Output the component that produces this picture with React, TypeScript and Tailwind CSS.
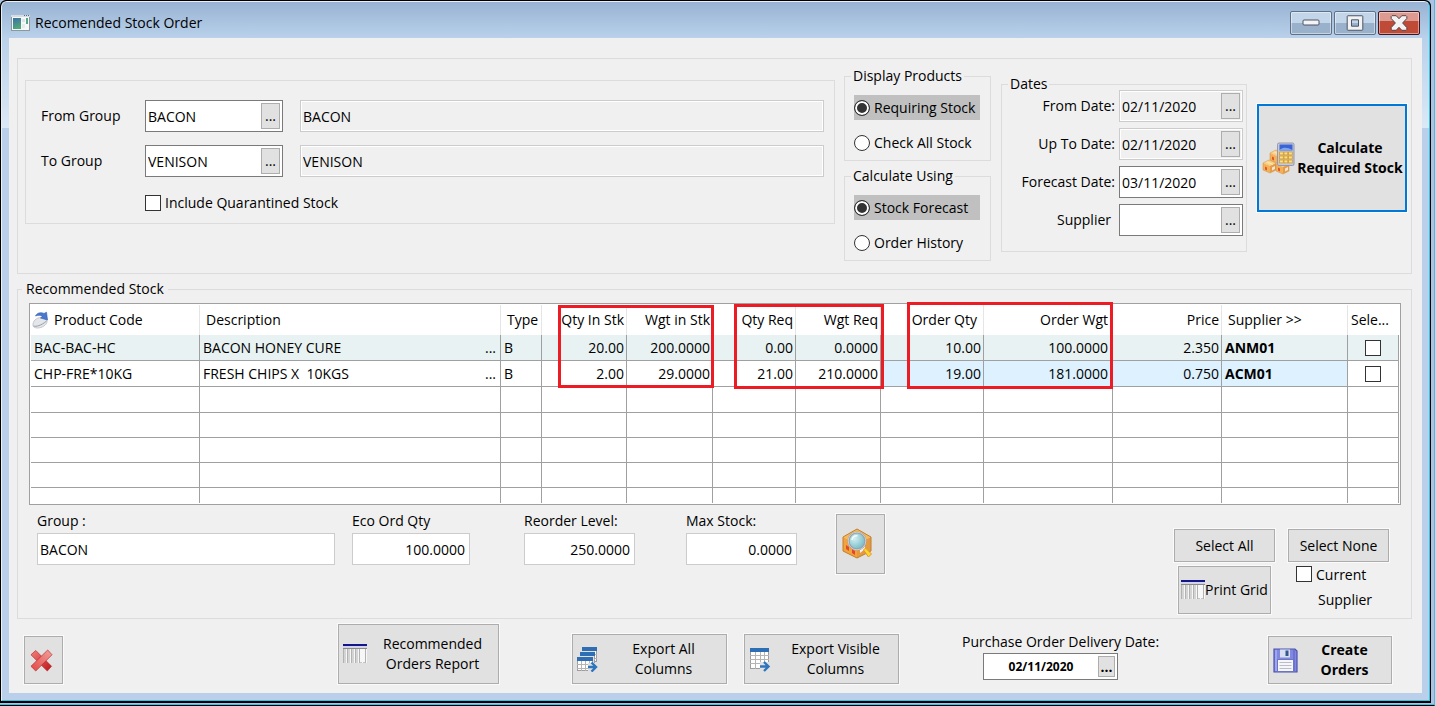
import React, { useId } from "react";

const panelBorder = "border border-[#dcdcdc]";
const raised = "border border-[#adadad] bg-[#e1e1e1] shadow-[0_0_0_1px_#fafafa]";

function WindowIcon() {
  return (
    <svg width="19" height="16" viewBox="0 0 19 16" aria-hidden="true">
      <defs>
        <linearGradient id="win-pane" x1="0" y1="0" x2="0.3" y2="1">
          <stop offset="0" stopColor="#3c6fa5" />
          <stop offset="1" stopColor="#4fa77c" />
        </linearGradient>
      </defs>
      <rect x="0.5" y="0.5" width="18" height="15" fill="#f6f8f8" stroke="#8e989c" />
      <rect x="0" y="0" width="19" height="2" fill="#d5dde2" />
      <path d="M13 .5h1M15 .5h1M17 .5h1" stroke="#5a6c7c" />
      <rect x="2" y="3" width="8" height="11" fill="url(#win-pane)" />
      <rect x="11" y="4" width="3" height="3" fill="#dfe4e6" />
      <rect x="11" y="9" width="3" height="4" fill="#e8ebec" />
      <rect x="15" y="3" width="2" height="6" fill="#58a68c" />
    </svg>
  );
}

function MinimizeGlyph() {
  return (
    <svg width="18" height="8" viewBox="0 0 18 8" aria-hidden="true">
      <rect x="1" y="1" width="16" height="5" rx="1" fill="#f4f4f4" stroke="#4c5566" />
    </svg>
  );
}

function MaximizeGlyph() {
  return (
    <svg width="18" height="16" viewBox="0 0 18 16" aria-hidden="true">
      <path
        d="M2 .75h14a.8.8 0 0 1 .8.8v12.9a.8.8 0 0 1-.8.8H2a.8.8 0 0 1-.8-.8V1.55A.8.8 0 0 1 2 .75ZM5.5 4.8v6.4h7V4.8Z"
        fill="#f2f2f2"
        fillRule="evenodd"
        stroke="#4c5566"
      />
    </svg>
  );
}

function CloseGlyph() {
  return (
    <svg width="18" height="16" viewBox="0 0 18 16" aria-hidden="true">
      <path
        d="M1.2 1.5 2 .7h4.2L9 3.7l2.8-3H16l.8.8v2L12.6 8l4.2 4.5v2l-.8.8h-4.2L9 12.3l-2.8 3H2l-.8-.8v-2L5.4 8 1.2 3.5Z"
        fill="#f3f3f3"
        stroke="#57444c"
      />
    </svg>
  );
}

function Box({ x, y }: { x: number; y: number }) {
  return (
    <g transform={`translate(${x} ${y})`}>
      <path d="M0 3 6 0l7 3-6 3Z" fill="#fbd083" />
      <path d="M0 3 7 6v7L0 10Z" fill="#f3b158" />
      <path d="M13 3 7 6v7l6-3Z" fill="#e59d45" />
      <path d="m3 1.5 7 3" stroke="#fde7b4" strokeWidth="1.2" />
      <path d="M2 6.5v3l2 1v-3Z" fill="#e2552c" />
      <path d="m9 7.5 3-1.4v3L9 10.5Z" fill="#f5e3d8" />
      <path d="M0 3 6 0l7 3v7l-6 3-7-3Z" fill="none" stroke="#d08f45" strokeWidth="0.5" />
    </g>
  );
}

function CalculateIcon() {
  return (
    <svg width="33" height="33" viewBox="0 0 33 33" className="shrink-0" aria-hidden="true">
      <Box x={8} y={8} />
      <Box x={1} y={18} />
      <Box x={14} y={19} />
      <rect x="15.5" y="1" width="16.5" height="22.5" rx="1.5" fill="#c5c9dc" stroke="#8d92ac" strokeWidth="0.9" />
      <rect x="17.5" y="2.5" width="13" height="6" fill="#3a63d6" />
      <path d="M18 7.5c4-3 8-2 12 .3v.7H18Z" fill="#7ea6f2" />
      {[10, 14, 18].map((y) =>
        [17.5, 22, 26.5].map((x) => (
          <rect key={`${x}-${y}`} x={x} y={y} width="3.8" height="2.9" fill="#fbe08a" stroke="#d79a26" strokeWidth="0.8" />
        )),
      )}
    </svg>
  );
}

function SearchBoxIcon() {
  return (
    <svg width="32" height="32" viewBox="0 0 32 32" aria-hidden="true">
      <defs>
        <radialGradient id="lens" cx="0.35" cy="0.35" r="0.8">
          <stop offset="0" stopColor="#d4f0f3" />
          <stop offset="1" stopColor="#63b0bd" />
        </radialGradient>
      </defs>
      <path d="M1 9 15 1l14 8-14 7Z" fill="#f6bb58" />
      <path d="M1 9l14 7v14L1 23Z" fill="#f3a33c" />
      <path d="M29 9 15 16v14l14-7Z" fill="#e59a40" />
      <path d="M1 9 15 1l14 8v14l-14 7-14-7Z" fill="none" stroke="#c07f2c" />
      <path d="m4 17 3 2v4l-3-2ZM10 21l3 2v4l-3-2Z" fill="#e4472b" />
      <path d="m18 20 5-3v4l-5 4Z" fill="#f3f1f4" />
      <path d="m21.500 22 2-2 6 6-3 3Z" fill="#fcd533" stroke="#e59824" />
      <circle cx="15" cy="13" r="8.500" fill="url(#lens)" stroke="#9a9da3" strokeWidth="2.200" />
      <circle cx="15" cy="13" r="8.800" fill="none" stroke="#d6d9dd" strokeWidth="0.800" />
      <path d="M10 12c.5-3 3-4.500 5.500-4.300" fill="none" stroke="#f2fcfd" strokeWidth="1.500" />
    </svg>
  );
}

function SortIcon() {
  return (
    <svg width="18" height="18" viewBox="0 0 18 18" className="shrink-0" aria-hidden="true">
      <path d="M1 14.500C.5 10 4.500 6.500 9 6.500c4 0 6.500 2 6 4.500-.5 3-5 6-9.500 6-2.500 0-4.300-.8-4.500-2.500Z" fill="#e4e6ea" stroke="#b9bcc4" strokeWidth="0.800" />
      <path d="M1.500 15c2.500 1 8-.5 13-5" fill="none" stroke="#9a9eaa" />
      <path d="M3.500 5C5 1.800 9 .8 12 2.500L14.500 1.200 15.500 9 8.500 7l2-1.500C8.500 4 6 4 3.500 5Z" fill="#4a78cf" stroke="#2f58ab" strokeWidth="0.600" />
    </svg>
  );
}

function GridIcon() {
  return (
    <svg width="24" height="20" viewBox="0 0 24 20" className="shrink-0" aria-hidden="true">
      <rect x="0" y="4" width="24" height="15" fill="#f7f7f7" />
      <rect x="0" y="0" width="24" height="2" fill="#15158a" />
      <rect x="0" y="2" width="24" height="2" fill="#d3d4e8" />
      <path d="M0 4.500h24" stroke="#8a8a8a" />
      <path d="M0 18.500h24" stroke="#c6c6c6" strokeDasharray="3 1" />
      <path d="M2 5v14M6 5v14M10 5v14M14 5v14" stroke="#d4d4d4" strokeWidth="2" />
      <path d="M.5 5v14M4.500 5v14M8.500 5v14M12.500 5v14M16.500 5v14M22.500 5v14" stroke="#b2b2b2" />
    </svg>
  );
}

function Sheet({ x, y, w, h }: { x: number; y: number; w: number; h: number }) {
  const cols = [1, 2, 3].map((i) => Math.round((w * i) / 4) + 0.5);
  return (
    <g transform={`translate(${x} ${y})`}>
      <rect x="0.500" y="0.500" width={w - 1} height={h - 1} fill="#fff" stroke="#9d9d9d" />
      {cols.map((c) => (
        <path key={c} d={`M${c} 4V${h}`} stroke="#b5b5b5" />
      ))}
      <path d={`M0 7.500H${w}M0 11.500H${w}M0 15.500H${w > 17 ? w : 0}`} stroke="#b5b5b5" />
      <rect x="0" y="0" width={w} height="4" fill="#2e6eb5" />
    </g>
  );
}

function ExportAllIcon() {
  return (
    <svg width="24" height="25" viewBox="0 0 24 25" className="shrink-0" aria-hidden="true">
      <Sheet x={5} y={0} w={15} h={15} />
      <path d="M2 4h16v16H2Z" fill="#e1e1e1" />
      <Sheet x={3} y={5} w={15} h={15} />
      <path d="M0 9h17v15H0Z" fill="#e1e1e1" />
      <Sheet x={0} y={10} w={16} h={14} />
      <path d="M11 16h8v8h-8Z" fill="#e1e1e1" />
      <path d="M11 20h7M14.500 15.500 19 20l-4.500 4.500" fill="none" stroke="#2e75bd" strokeWidth="2.400" />
    </svg>
  );
}

function ExportVisibleIcon() {
  return (
    <svg width="24" height="25" viewBox="0 0 24 25" className="shrink-0" aria-hidden="true">
      <Sheet x={1} y={1} w={19} h={21} />
      <path d="M11 15h12v9H11Z" fill="#e1e1e1" />
      <path d="M11 19.500h8M15 15l4.500 4.500L15 24" fill="none" stroke="#2e75bd" strokeWidth="2.400" />
    </svg>
  );
}

function SaveIcon() {
  return (
    <svg width="25" height="25" viewBox="0 0 25 25" className="shrink-0" aria-hidden="true">
      <path d="M1 1h21l2 2v21H1Z" fill="#8088df" stroke="#4b53ae" strokeWidth="1.200" />
      <path d="M3 2v21" stroke="#a9b0f2" strokeWidth="1.500" />
      <path d="M21 2v21" stroke="#666dcb" strokeWidth="1.500" />
      <rect x="7" y="1.500" width="10" height="8" fill="#d6def0" />
      <rect x="12.500" y="2.500" width="3" height="5.500" fill="#34568f" />
      <rect x="4.500" y="11.500" width="16" height="12" fill="#f6f6fa" stroke="#6c74c6" />
      <path d="M6.500 14.500h12M6.500 17.500h12M6.500 20.500h12" stroke="#b9bdc9" strokeWidth="1.200" />
    </svg>
  );
}

function CancelIcon() {
  return (
    <svg width="23" height="23" viewBox="0 0 24 24" aria-hidden="true">
      <defs>
        <linearGradient id="cross-a" x1="0" y1="0" x2="1" y2="1">
          <stop offset="0" stopColor="#f4807c" />
          <stop offset="1" stopColor="#bd1418" />
        </linearGradient>
        <linearGradient id="cross-b" x1="1" y1="0" x2="0" y2="1">
          <stop offset="0" stopColor="#f3a09c" />
          <stop offset="1" stopColor="#e24644" />
        </linearGradient>
      </defs>
      <path d="m1 6 5-4.500 16.500 16.500-4.500 5Z" fill="url(#cross-a)" stroke="#b52a2c" strokeWidth="0.700" />
      <path d="m18.500 1 4.500 5L6 23 1 18Z" fill="url(#cross-b)" stroke="#b52a2c" strokeWidth="0.700" />
    </svg>
  );
}

type LookupProps = {
  label: string;
  value: string;
  disabled?: boolean;
  labelClass: string;
  boxClass: string;
};

function LookupField({ label, value, disabled = false, labelClass, boxClass }: LookupProps) {
  const id = useId();
  return (
    <>
      <label htmlFor={id} className={labelClass}>
        {label}
      </label>
      <div
        className={`flex h-8 shrink-0 items-center border pr-0.5 ${boxClass} ${
          disabled ? "border-[#cccccc] bg-[#f0f0f0] shadow-[inset_0_0_0_1px_#fff]" : "border-[#7a7a7a] bg-white"
        }`}
      >
        <input id={id} defaultValue={value} readOnly={disabled} className="h-6 w-0 min-w-0 flex-1 bg-transparent pl-0.5 outline-none" />
        <button type="button" aria-label={`Look up ${label}`} className="h-[26px] w-[19px] shrink-0 border border-[#adadad] bg-[#e1e1e1] text-center">
          ...
        </button>
      </div>
    </>
  );
}

function RadioRow({ name, label, checked = false }: { name: string; label: string; checked?: boolean }) {
  return (
    <label className={`flex h-[25px] items-center gap-1 ${checked ? "bg-[#c0c0c0]" : ""}`}>
      <input
        type="radio"
        name={name}
        defaultChecked={checked}
        className="size-4 shrink-0 appearance-none rounded-full border border-[#333] bg-white checked:bg-[#333] checked:shadow-[inset_0_0_0_2px_#fff]"
      />
      <span className="whitespace-nowrap">{label}</span>
    </label>
  );
}

const checkboxClass =
  "size-4 shrink-0 appearance-none border border-[#333] bg-white checked:bg-[#333] checked:shadow-[inset_0_0_0_3px_#fff]";

function RadioGroup({ title, name, options }: { title: string; name: string; options: string[] }) {
  return (
    <fieldset className={`${panelBorder} pb-[5px] pr-2.5 pl-[9px]`}>
      <legend className="-ml-[3px] px-0.5">{title}</legend>
      <div className="flex flex-col gap-2.5 pt-[9px]">
        {options.map((option, i) => (
          <RadioRow key={option} name={name} label={option} checked={i === 0} />
        ))}
      </div>
    </fieldset>
  );
}

function StockField({ label, value, className, numeric = true }: { label: string; value: string; className: string; numeric?: boolean }) {
  const id = useId();
  return (
    <div className={`flex flex-col gap-0.5 ${className}`}>
      <label htmlFor={id} className="whitespace-nowrap">
        {label}
      </label>
      <input
        id={id}
        readOnly
        value={value}
        className={`h-8 w-full border border-[#cccccc] bg-white outline-none ${numeric ? "pr-1 text-right" : "pl-0.5"}`}
      />
    </div>
  );
}

type StockRow = {
  code: string;
  description: string;
  type: string;
  figures: string[];
  price: string;
  supplier: string;
};

const rows: StockRow[] = [
  {
    code: "BAC-BAC-HC",
    description: "BACON HONEY CURE",
    type: "B",
    figures: ["20.00", "200.0000", "0.00", "0.0000", "10.00", "100.0000"],
    price: "2.350",
    supplier: "ANM01",
  },
  {
    code: "CHP-FRE*10KG",
    description: "FRESH CHIPS X  10KGS",
    type: "B",
    figures: ["2.00", "29.0000", "21.00", "210.0000", "19.00", "181.0000"],
    price: "0.750",
    supplier: "ACM01",
  },
];

const emptyRowHeights = ["h-[26px]", "h-[25px]", "h-[25px]", "h-[25px]"];

const headCell = "border-r border-[#e5e5e5] p-0 font-normal whitespace-nowrap";
const bodyCell = "border-r border-b border-[#a0a0a0] p-0 whitespace-nowrap";
const highlight = "absolute border-[3px] border-[#ed1c24] pointer-events-none";

function StockTable() {
  return (
    <div className="relative ml-[11px] mr-2.5 border border-[#a0a0a0] bg-white p-px">
      <table className="w-full table-fixed border-separate border-spacing-0">
        <colgroup>
          <col className="w-[169px]" />
          <col />
          <col className="w-[41px]" />
          <col className="w-[85px]" />
          <col className="w-[86px]" />
          <col className="w-[83px]" />
          <col className="w-[85px]" />
          <col className="w-[103px]" />
          <col className="w-[129px]" />
          <col className="w-[109px]" />
          <col className="w-[126px]" />
          <col className="w-[51px]" />
        </colgroup>
        <thead>
          <tr className="h-[30px]">
            <th className={`${headCell} text-left`}>
              <span className="flex items-center gap-1 pl-px">
                <SortIcon />
                Product Code
              </span>
            </th>
            <th className={`${headCell} pl-1.5 text-left`}>Description</th>
            <th className={`${headCell} pl-1.5 text-left`}>Type</th>
            <th className={`${headCell} pr-0.5 text-right`}>Qty In Stk</th>
            <th className={`${headCell} pr-0.5 text-right`}>Wgt in Stk</th>
            <th className={`${headCell} pr-0.5 text-right`}>Qty Req</th>
            <th className={`${headCell} pr-0.5 text-right`}>Wgt Req</th>
            <th className={`${headCell} pr-1.5 text-right`}>Order Qty</th>
            <th className={`${headCell} pr-1 text-right`}>Order Wgt</th>
            <th className={`${headCell} pr-0.5 text-right`}>Price</th>
            <th className={`${headCell} pl-1.5 text-left`}>Supplier &gt;&gt;</th>
            <th className="p-0 pl-[3px] text-left font-normal">Sele...</th>
          </tr>
        </thead>
        <tbody>
          {rows.map((row, i) => {
            const tint = i === 0 ? "" : "bg-[#ddf1ff]";
            return (
              <tr key={row.code} className={`h-[26px] ${i === 0 ? "bg-[#e8f2f2]" : ""}`}>
                <td className={`${bodyCell} pl-[3px]`}>{row.code}</td>
                <td className={`${bodyCell} pr-1 pl-[3px]`}>
                  <div className="flex justify-between">
                    <span className="whitespace-pre">{row.description}</span>
                    <button type="button" aria-label={`Details of ${row.description}`}>
                      ...
                    </button>
                  </div>
                </td>
                <td className={`${bodyCell} pl-[3px]`}>{row.type}</td>
                {row.figures.map((figure, n) => (
                  <td key={n} className={`${bodyCell} text-right ${n < 4 ? "pr-0.5" : `${tint} ${n === 4 ? "pr-0.5" : "pr-1"}`}`}>
                    {figure}
                  </td>
                ))}
                <td className={`${bodyCell} ${tint} pr-0.5 text-right`}>{row.price}</td>
                <td className={`${bodyCell} ${tint} pl-[3px] font-bold`}>{row.supplier}</td>
                <td className={bodyCell}>
                  <input type="checkbox" aria-label={`Select ${row.code}`} className={`${checkboxClass} mx-auto block`} />
                </td>
              </tr>
            );
          })}
          {emptyRowHeights.map((height, r) => (
            <tr key={r} className={height}>
              {Array.from({ length: 12 }, (_, c) => (
                <td key={c} className={bodyCell} />
              ))}
            </tr>
          ))}
          <tr className="h-[15px]">
            {Array.from({ length: 12 }, (_, c) => (
              <td key={c} className="border-r border-[#a0a0a0] p-0" />
            ))}
          </tr>
        </tbody>
      </table>
      <div className={`${highlight} top-px right-[686px] h-[83px] w-[156px]`} />
      <div className={`${highlight} top-0 right-[516px] h-[85px] w-[150px]`} />
      <div className={`${highlight} -top-0.5 right-[287px] h-[87px] w-[206px]`} />
    </div>
  );
}

function TitleBar() {
  const control =
    "flex h-6 w-[42px] items-center justify-center rounded-xs border shadow-[inset_0_0_0_1px_rgba(255,255,255,0.45)]";
  const plain = "border-[#5f7088] bg-linear-to-b from-[#c3d5e8] from-50% to-[#9ab1cb] to-50%";
  return (
    <header className="flex h-9 items-start bg-linear-to-b from-[#98b3d3] to-[#b9d1ea] pr-[9px] pl-[9px]">
      <div className="flex h-full items-center gap-[5px] pt-1.5">
        <WindowIcon />
        <h1>Recomended Stock Order</h1>
      </div>
      <div className="ml-auto flex gap-0.5 pt-[9px]">
        <button type="button" aria-label="Minimize" className={`${control} ${plain}`}>
          <MinimizeGlyph />
        </button>
        <button type="button" aria-label="Maximize" className={`${control} ${plain}`}>
          <MaximizeGlyph />
        </button>
        <button
          type="button"
          aria-label="Close"
          className={`${control} border-[#43141c] bg-linear-to-b from-[#dc9a90] from-40% to-[#bf4a36] to-40%`}
        >
          <CloseGlyph />
        </button>
      </div>
    </header>
  );
}

function SelectionPanel() {
  return (
    <section className={`${panelBorder} flex items-start pt-[7px] pr-1 pb-3 pl-[7px]`}>
      <div className={`${panelBorder} mt-3.5 flex-1 pt-[19px] pr-2.5 pb-2.5 pl-[15px]`}>
        <div className="flex flex-col gap-[13px]">
          {[
            ["From Group", "BACON"],
            ["To Group", "VENISON"],
          ].map(([label, value]) => (
            <div key={label} className="flex items-center">
              <LookupField label={label} value={value} labelClass="w-[104px] shrink-0" boxClass="w-[138px]" />
              <input
                readOnly
                aria-label={`${label} name`}
                value={value}
                className="ml-[17px] h-8 min-w-0 flex-1 border border-[#cccccc] bg-[#f0f0f0] pl-0.5 shadow-[inset_0_0_0_1px_#fff] outline-none"
              />
            </div>
          ))}
        </div>
        <label className="mt-4 ml-[104px] flex w-fit items-center gap-1">
          <input type="checkbox" className={checkboxClass} />
          Include Quarantined Stock
        </label>
      </div>

      <div className="ml-[9px] flex w-[147px] shrink-0 flex-col gap-[5px]">
        <RadioGroup title="Display Products" name="display" options={["Requiring Stock", "Check All Stock"]} />
        <RadioGroup title="Calculate Using" name="calculate" options={["Stock Forecast", "Order History"]} />
      </div>

      <fieldset className={`${panelBorder} mt-2 ml-2.5 w-[246px] shrink-0 pr-[3px] pb-[15px]`}>
        <legend className="ml-1.5 px-0.5">Dates</legend>
        <div className="-mt-1 grid grid-cols-[1fr_auto] items-center gap-x-1 gap-y-1.5 text-right">
          <LookupField label="From Date:" value="02/11/2020" disabled labelClass="" boxClass="w-[124px]" />
          <LookupField label="Up To Date:" value="02/11/2020" disabled labelClass="" boxClass="w-[124px]" />
          <LookupField label="Forecast Date:" value="03/11/2020" labelClass="" boxClass="w-[124px]" />
          <LookupField label="Supplier" value="" labelClass="pr-1" boxClass="w-[124px]" />
        </div>
      </fieldset>

      <button
        type="button"
        className="mt-[38px] ml-2.5 flex h-[108px] w-[150px] shrink-0 items-center border-2 border-[#0078d7] bg-[#e1e1e1] pl-[3px] font-bold whitespace-nowrap shadow-[0_0_0_1px_#fafafa]"
      >
        <CalculateIcon />
        <span className="flex-1 text-center">
          Calculate
          <br />
          Required Stock
        </span>
      </button>
    </section>
  );
}

function StockPanel() {
  return (
    <fieldset className={`${panelBorder} mt-[5px] min-w-0 pb-1`}>
      <legend className="ml-1 px-1">Recommended Stock</legend>
      <div className="pt-1">
        <StockTable />
      </div>
      <div className="flex items-start pt-1.5 pr-[22px] pl-[19px]">
        <StockField label="Group :" value="BACON" className="w-[298px]" numeric={false} />
        <StockField label="Eco Ord Qty" value="100.0000" className="ml-[17px] w-[118px]" />
        <StockField label="Reorder Level:" value="250.0000" className="ml-[54px] w-[111px]" />
        <StockField label="Max Stock:" value="0.0000" className="ml-[51px] w-[111px]" />
        <button type="button" aria-label="View product" className={`${raised} mt-[3px] ml-[39px] flex h-[60px] w-[49px] items-center pl-[5px]`}>
          <SearchBoxIcon />
        </button>
        <div className="ml-auto flex gap-[13px] pt-[18px]">
          <div className="flex flex-col items-center gap-1">
            <button type="button" className={`${raised} h-[33px] w-[101px]`}>
              Select All
            </button>
            <button type="button" className={`${raised} flex h-12 w-[93px] items-center justify-center whitespace-nowrap`}>
              <GridIcon />
              Print Grid
            </button>
          </div>
          <div className="flex flex-col gap-1">
            <button type="button" className={`${raised} h-[33px] w-[101px]`}>
              Select None
            </button>
            <label className="ml-2 flex items-start gap-1 leading-[25px]">
              <input type="checkbox" className={checkboxClass} />
              <span className="-mt-1">
                Current
                <br />
                <span className="pl-0.5">Supplier</span>
              </span>
            </label>
          </div>
        </div>
      </div>
    </fieldset>
  );
}

function ActionBar() {
  const wide = "flex items-center text-center";
  return (
    <footer className="mt-1.5 flex h-[68px] items-end pr-5 pb-[9px] pl-[7px]">
      <button type="button" aria-label="Cancel" className={`${raised} flex h-12 w-[39px] shrink-0 items-center pl-[5px]`}>
        <CancelIcon />
      </button>
      <button type="button" className={`${raised} ${wide} ml-[275px] h-[60px] w-[161px] shrink-0 pl-1`}>
        <GridIcon />
        <span className="flex-1">
          Recommended
          <br />
          Orders Report
        </span>
      </button>
      <button type="button" className={`${raised} ${wide} ml-[73px] h-[50px] w-[155px] shrink-0 pl-1`}>
        <ExportAllIcon />
        <span className="flex-1">
          Export All
          <br />
          Columns
        </span>
      </button>
      <button type="button" className={`${raised} ${wide} ml-[17px] h-[50px] w-[155px] shrink-0 pl-1`}>
        <ExportVisibleIcon />
        <span className="flex-1">
          Export Visible
          <br />
          Columns
        </span>
      </button>
      <div className="ml-[63px] flex flex-col gap-px pb-1">
        <label htmlFor="delivery-date" className="whitespace-nowrap">
          Purchase Order Delivery Date:
        </label>
        <div className="ml-[21px] flex h-[27px] w-[135px] items-center border border-[#7a7a7a] bg-white pr-0.5 font-bold">
          <input id="delivery-date" defaultValue="02/11/2020" className="w-0 min-w-0 flex-1 text-center text-xs outline-none" />
          <button type="button" aria-label="Look up delivery date" className="flex h-[21px] w-[17px] items-center justify-center border border-[#adadad] bg-[#e1e1e1]">
            ...
          </button>
        </div>
      </div>
      <button type="button" className={`${raised} ${wide} ml-auto h-12 w-[124px] shrink-0 pl-1 font-bold`}>
        <SaveIcon />
        <span className="flex-1">
          Create
          <br />
          Orders
        </span>
      </button>
    </footer>
  );
}

export default function App() {
  return (
    <div className="min-h-screen border-r border-b border-r-[#30c8e8] border-b-black bg-[#a9c4e4] font-['Open_Sans','Noto_Sans',sans-serif] text-[14px] leading-5 text-black">
      <div className="border-b border-[#30c8e8] pr-[3px] pb-px">
        <div className="rounded-t-md border-x border-t border-b-2 border-black bg-black">
          <div className="overflow-hidden rounded-t-md border-t border-r border-b border-l border-t-[#e8f0f8] border-r-[#30c8e8] border-b-[#30c8e8] border-l-[#e8f0f8] bg-[#b9d1ea]">
            <TitleBar />
            <div className="bg-[#b9cfea] bg-[linear-gradient(#b9d1ea,#dce8f6)] bg-[length:100%_90px] bg-no-repeat px-[7px] pb-[7px]">
              <main className="bg-[#f0f0f0] pt-5 pr-2.5 pl-2">
                <SelectionPanel />
                <StockPanel />
                <ActionBar />
              </main>
            </div>
          </div>
        </div>
      </div>
    </div>
  );
}
